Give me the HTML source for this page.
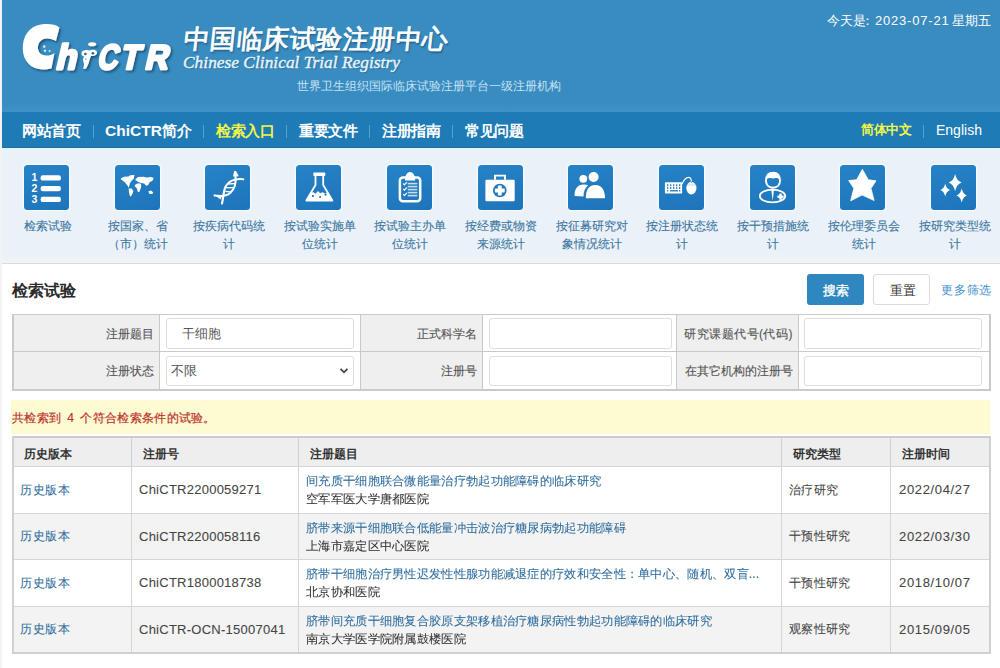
<!DOCTYPE html>
<html><head><meta charset="utf-8"><style>
*{box-sizing:border-box;margin:0;padding:0}
html,body{width:1000px;height:668px;overflow:hidden;background:#f3f3f3;font-family:"Liberation Sans",sans-serif;position:relative}
.a{position:absolute;white-space:nowrap}
#hdr{position:absolute;left:2px;top:0;width:998px;height:112px;background:#398cc0}
#hdr2{position:absolute;left:2px;top:105px;width:998px;height:7px;background:linear-gradient(#3a8fc2,#3c93c6)}
#nav{position:absolute;left:2px;top:112px;width:998px;height:36px;background:#1f7bb6;border-bottom:1px solid #1b6ea6}
#icons{position:absolute;left:2px;top:148px;width:998px;height:116px;background:linear-gradient(#eaf1f8 0,#eaf1f8 92%,#f0f5f9 100%);border-top:1px solid #d9f5ff;border-bottom:1px solid #d5dde3}
.nv{position:absolute;top:113px;line-height:35px;font-size:15px;letter-spacing:-0.3px;font-weight:bold;color:#fff;white-space:nowrap}
.sep{position:absolute;top:125px;width:1px;height:13px;background:#5e9ecb}
.tile{position:absolute;top:165px;width:45px;height:45px;border-radius:3.5px;background:linear-gradient(160deg,#2783c6,#1d74ba);box-shadow:0 0 0 1.3px #f4fcff}
.tile svg{position:absolute;left:0;top:0;width:45px;height:45px}
.lbl{position:absolute;top:216.5px;width:80px;text-align:center;font-size:12px;line-height:18.5px;color:#3b76a0;-webkit-text-stroke:0.1px #3b76a0}
.fl{position:absolute;background:#efefef;border:1px solid #c9c9c9;font-size:12px;color:#555;-webkit-text-stroke:0.12px currentColor;text-align:right;padding-right:5px;padding-top:1px;white-space:nowrap}
.fc{position:absolute;background:#fff;border:1px solid #c9c9c9}
.inp{position:absolute;background:#fff;border:1px solid #dedede;border-radius:3px;font-size:13px;color:#555;white-space:nowrap}
.th{position:absolute;background:#eeeeee;border:1px solid #d0d0d0;font-size:12px;font-weight:bold;color:#333;white-space:nowrap;padding-top:3px}
.td{position:absolute;border:1px solid #d6d6d6;font-size:13px;color:#444;white-space:nowrap;-webkit-text-stroke:0.08px currentColor}
.lnk{color:#2f6d9e}
.st{-webkit-text-stroke:0.2px currentColor}
</style></head><body>
<div class="a" style="left:2px;top:263px;width:998px;height:405px;background:#fff"></div><div id="hdr"></div><div id="hdr2"></div>
<svg class="a" style="left:0px;top:0px" width="200" height="90" viewBox="0 0 200 90">
<defs><filter id="sh" x="-20%" y="-20%" width="140%" height="140%"><feDropShadow dx="1.6" dy="1.8" stdDeviation="1.1" flood-color="#0a3a60" flood-opacity="0.7"/></filter></defs>
<g filter="url(#sh)" fill="#fff">
<path d="M59.5 27.5 C55 24 48 23.5 41 24.5 C29 26.5 22.5 36 22.8 49 C23 61 31 69.5 43 69.5 C46 69.5 49 69 51.5 68.5 L54.5 53 C52 55 49.5 55.5 46.5 55.5 C40.5 55.5 37.5 51.5 38 46.5 C38.5 41.5 42.5 38.5 47 38.5 C50.5 38.5 53 39.5 56 41 Z"/>
<g transform="translate(0,69) skewX(-13) translate(0,-69)" stroke="#fff" stroke-width="2.6" stroke-linejoin="round" font-family="Liberation Sans" font-weight="bold">
<text x="55" y="68.6" font-size="31" transform="translate(0,68.6) scale(1.08,1.13) translate(-4.2,-68.6)">h</text>
<text transform="translate(96.5,0) scale(0.8,1)" x="0" y="68.6" font-size="35">C</text>
<text transform="translate(119.5,0) scale(0.91,1)" x="0" y="68.6" font-size="34.5">T</text>
<text transform="translate(144,0) scale(0.93,1)" x="0" y="68.6" font-size="34.5">R</text>
</g>
<ellipse cx="92.2" cy="44.2" rx="4" ry="2"/>
<path d="M81.5 53 C82 50 86 49.5 89 50.5 C91.5 49.5 96 49 97 52 C97.5 55 94 56.5 91 56 C90 58 89.5 60 89 62 C88.5 64 87.5 66 86 68.8 L83 68.8 C84 66 84.5 64 83.5 62 C82.5 60 83 58 84.5 56.5 C82.5 56.5 81.2 55 81.5 53 Z"/>
</g>
<g fill="#cfe6f5"><circle cx="44.2" cy="46.6" r="1.3"/><circle cx="45" cy="50.7" r="1.2"/><circle cx="49.6" cy="51" r="1.1"/></g><g fill="#235f8c"><circle cx="85.4" cy="54" r="1.3"/><circle cx="92.9" cy="53.2" r="1.3"/></g><circle cx="85.8" cy="59.2" r="0.9" fill="#8fc3e6"/>
</svg>
<div class="a" style="left:182px;top:24px;font-family:'Liberation Serif',serif;font-size:26px;font-weight:normal;-webkit-text-stroke:0.9px #fff;color:#fff;line-height:32px;letter-spacing:0.5px;transform:skewX(-6deg);transform-origin:0 100%;text-shadow:1px 2px 2px rgba(10,50,90,.6)">中国临床试验注册中心</div>
<div class="a" style="left:183px;top:51.5px;font-family:'Liberation Serif',serif;font-style:italic;font-size:17.4px;color:#e6f4fc;-webkit-text-stroke:0.4px #e6f4fc;line-height:20px;text-shadow:1px 1px 1px rgba(10,50,90,.4)">Chinese Clinical Trial Registry</div>
<div class="a" style="left:297px;top:77px;font-size:12.3px;letter-spacing:0px;line-height:18px;color:#c6e2f4">世界卫生组织国际临床试验注册平台一级注册机构</div>
<div class="a" style="left:827px;top:12px;font-size:13px;line-height:18px;color:#fff">今天是</div><div class="a" style="left:861px;top:12px;font-size:13px;line-height:18px;color:#fff">：</div><div class="a" style="left:875px;top:12px;font-size:13px;line-height:18px;color:#fff;letter-spacing:0.8px">2023-07-21</div><div class="a" style="left:952px;top:12px;font-size:13px;line-height:18px;color:#fff">星期五</div>
<div id="nav"></div>
<div class="nv" style="left:22px;color:#fff">网站首页</div>
<div class="nv" style="left:105px;color:#fff"><span style="font-size:15.5px;letter-spacing:0">ChiCTR</span>简介</div>
<div class="nv" style="left:216px;color:#f2f545">检索入口</div>
<div class="nv" style="left:299px;color:#fff">重要文件</div>
<div class="nv" style="left:382px;color:#fff">注册指南</div>
<div class="nv" style="left:465px;color:#fff">常见问题</div>
<div class="sep" style="left:93px"></div>
<div class="sep" style="left:203px"></div>
<div class="sep" style="left:286px"></div>
<div class="sep" style="left:369px"></div>
<div class="sep" style="left:452px"></div>
<div class="nv" style="left:861px;font-size:12.6px;color:#f2f545">简体中文</div>
<div class="sep" style="left:923px"></div>
<div class="nv" style="left:936px;font-size:14px;font-weight:normal;letter-spacing:0px">English</div>
<div id="icons"></div>
<div class="tile" style="left:24.0px"><svg viewBox="0 0 45 45"><g fill="#fff"><rect x="16.6" y="10.3" width="20.3" height="5.3" rx="2.2"/><rect x="16.6" y="21" width="20.3" height="5.3" rx="2.2"/><rect x="16.6" y="31.8" width="20.3" height="5.3" rx="2.2"/></g><g fill="#fff" font-family="Liberation Sans" font-weight="bold" font-size="10.5"><text x="7.5" y="15.6">1</text><text x="7.5" y="26.6">2</text><text x="7.5" y="37.5">3</text></g></svg></div>
<div class="lbl" style="left:7.5px">检索试验</div>
<div class="tile" style="left:114.7px"><svg viewBox="0 0 45 45"><path fill="#fff" d="M5.7 13.4 L9.1 11.7 L13.3 11.4 L15.3 10.3 L19.5 10.0 L18.8 13.4 L16.7 15.8 L15.0 17.9 L14.3 20.7 L13.6 22.7 L12.6 20.7 L9.8 17.2 L7.8 15.8 L6.4 14.8 Z M13.6 23.4 L16.7 23.4 L18.4 26.2 L17.4 28.9 L15.7 31.7 L14.6 30.3 L14.0 26.9 Z M20.1 14.8 L22.9 12.1 L28.4 11.7 L31.9 12.4 L36.0 12.1 L38.7 13.1 L37.4 15.8 L34.6 17.2 L33.2 20.0 L31.2 20.7 L29.1 18.6 L26.3 17.9 L23.6 17.2 Z M19.8 20.0 L22.2 18.6 L25.7 18.6 L26.3 20.7 L25.7 23.4 L24.3 26.9 L22.9 26.9 L21.9 23.4 L19.8 21.3 Z M33.2 26.5 L36.0 25.5 L38.1 27.2 L37.4 28.9 L34.6 28.9 Z"/></svg></div>
<div class="lbl" style="left:98.2px">按国家、省（市）统计</div>
<div class="tile" style="left:205.4px"><svg viewBox="0 0 45 45"><g fill="none" stroke="#fff" stroke-width="2.1" stroke-linecap="round"><path d="M38.3 14.3 C30 13 22.5 16 19.8 23.5 C18.2 29 18.2 34 17 38.6"/><path d="M30.5 11.5 C31.3 18 29.5 24 25.2 28 C21.5 31 16 31.5 9.5 30.5"/></g><g stroke="#fff" stroke-width="1.3"><line x1="22.5" y1="19" x2="29.5" y2="18.7"/><line x1="21" y1="22.7" x2="28.5" y2="22.7"/><line x1="20.3" y1="26.3" x2="26.5" y2="27"/></g><path d="M29.2 6 L31 6 L33.8 11.3 L28 11.6 Z" fill="#fff"/><path d="M9 29.8 L17 31 L15.6 34.6 Z" fill="#fff"/></svg></div>
<div class="lbl" style="left:188.9px">按疾病代码统计</div>
<div class="tile" style="left:296.1px"><svg viewBox="0 0 45 45"><g fill="none" stroke="#fff" stroke-width="1.8" stroke-linejoin="round"><rect x="18.2" y="8.5" width="10.2" height="1.6" /><path d="M19.5 10.5 V20 L10.3 35.5 H36.4 L27.2 20 V10.5"/></g><path d="M14.8 28 L17 27 L19.5 28.8 L22 26 L24.2 28.2 L26.5 27.2 L29 28.4 L31.3 27.5 L36.5 35.6 H10.2 Z" fill="#fff"/><g fill="#1f6aa8"><circle cx="16.9" cy="31" r="1.1"/><circle cx="24.1" cy="32" r="1"/><circle cx="29.6" cy="29.6" r="1.1"/></g></svg></div>
<div class="lbl" style="left:279.6px">按试验实施单位统计</div>
<div class="tile" style="left:386.8px"><svg viewBox="0 0 45 45"><rect x="12.9" y="12.6" width="20.3" height="23.7" rx="3" fill="none" stroke="#fff" stroke-width="2.5"/><path d="M17.9 15.5 C17.9 11 19.8 7 23 7 C26.2 7 28.2 11 28.2 15.5 Z" fill="#fff"/><g stroke="#fff" stroke-width="1.6" opacity="0.75"><line x1="20.7" y1="18.6" x2="30.3" y2="18.6"/><line x1="20.7" y1="21.6" x2="30.3" y2="21.6"/><line x1="20.7" y1="24.6" x2="30.3" y2="24.6"/><line x1="20.7" y1="27.6" x2="30.3" y2="27.6"/><line x1="20.7" y1="30.6" x2="30.3" y2="30.6"/></g><g fill="none" stroke="#fff" stroke-width="1.2"><path d="M16.2 18.5 l1.3 1.3 l2.3-2.6"/><path d="M16.2 23.8 l1.3 1.3 l2.3-2.6"/><path d="M16.2 29.2 l1.3 1.3 l2.3-2.6"/></g></svg></div>
<div class="lbl" style="left:370.3px">按试验主办单位统计</div>
<div class="tile" style="left:477.5px"><svg viewBox="0 0 45 45"><rect x="7.4" y="14.8" width="29.3" height="21.4" rx="1.2" fill="#fff"/><path d="M17 14.8 V10.6 H27 V14.8" fill="none" stroke="#fff" stroke-width="1.9"/><circle cx="21.8" cy="25.5" r="6.8" fill="#2177b9"/><g fill="#fff"><rect x="19.9" y="20.6" width="3.8" height="9.8" rx="0.6"/><rect x="16.9" y="23.6" width="9.8" height="3.8" rx="0.6"/></g></svg></div>
<div class="lbl" style="left:461.0px">按经费或物资来源统计</div>
<div class="tile" style="left:568.2px"><svg viewBox="0 0 45 45"><g fill="#fff"><circle cx="15.3" cy="13.8" r="3.9"/><path d="M6.6 30.3 C6.6 24 9.5 19.6 15.5 19.6 C17.5 19.6 19 20 20 20.6 C17 23 15.5 26.5 15.5 31.5 L6.8 31 Z"/></g><path d="M17.2 33.9 C17 26 19.5 19.3 27.3 19.3 C35 19.3 37.8 26 37.6 33.9 Z" fill="#fff" stroke="#2177b9" stroke-width="1.2"/><circle cx="25.6" cy="12" r="5" fill="#fff"/></svg></div>
<div class="lbl" style="left:551.7px">按征募研究对象情况统计</div>
<div class="tile" style="left:658.9px"><svg viewBox="0 0 45 45"><rect x="5.9" y="17.2" width="17.2" height="11.4" rx="0.8" fill="#fff"/><g fill="#3a86c0"><rect x="8" y="19.2" width="1.3" height="2"/><rect x="11" y="19.2" width="1.3" height="2"/><rect x="14" y="19.2" width="1.3" height="2"/><rect x="17" y="19.2" width="1.3" height="2"/><rect x="20" y="19.2" width="1.3" height="2"/><rect x="8" y="22" width="1.3" height="2"/><rect x="11" y="22" width="1.3" height="2"/><rect x="14" y="22" width="1.3" height="2"/><rect x="17" y="22" width="1.3" height="2"/><rect x="20" y="22" width="1.3" height="2"/><rect x="8" y="25" width="1.3" height="1.5"/><rect x="11" y="25" width="8" height="1.5"/><rect x="20" y="25" width="1.3" height="1.5"/></g><ellipse cx="32.4" cy="23.1" rx="5.1" ry="6.3" fill="#fff"/><path d="M23 19.3 C24.5 15.5 26.5 12.4 29.5 12.4 C31.5 12.4 32.4 14 32.4 16.8" fill="none" stroke="#fff" stroke-width="1.1"/><path d="M27.5 20 H37.3" stroke="#8bbde0" stroke-width="0.6"/><path d="M31.8 18 L33 18 L32.4 16.8 Z" fill="#3a86c0"/></svg></div>
<div class="lbl" style="left:642.4px">按注册状态统计</div>
<div class="tile" style="left:749.6px"><svg viewBox="0 0 45 45"><path d="M16 15.8 C16 10 19 7.6 23 7.6 C27 7.6 30 10 30 15.8 C30 19.5 27.5 22.7 23 22.7 C18.5 22.7 16 19.5 16 15.8 Z" fill="none" stroke="#fff" stroke-width="1.9"/><path d="M16 15 C17 10 19.5 7.6 23 7.6 C26.5 7.6 29 10 30 15 C28 13 26 12.6 23 13.6 C20 12.6 18 13 16 15 Z" fill="#fff"/><ellipse cx="22.5" cy="31" rx="12.7" ry="6.3" fill="none" stroke="#fff" stroke-width="1.8"/><path d="M21.2 24.6 L24 24.6 L22.7 35.8 Z" fill="#fff"/><g fill="#fff"><rect x="27.4" y="30.5" width="6.2" height="2.4"/><rect x="29.3" y="28.6" width="2.4" height="6.2"/></g></svg></div>
<div class="lbl" style="left:733.1px">按干预措施统计</div>
<div class="tile" style="left:840.3px"><svg viewBox="0 0 45 45"><path d="M22.4 4.3 L28.3 14.8 L36 15.8 L31 23.4 L34.1 35.5 L22.1 30 L10.7 35.8 L13.8 23.4 L8.7 15.5 L16.6 14.8 Z" fill="#fff" stroke="#fff" stroke-width="0.8" stroke-linejoin="round"/></svg></div>
<div class="lbl" style="left:823.8px">按伦理委员会统计</div>
<div class="tile" style="left:931.0px"><svg viewBox="0 0 45 45"><path fill="#fff" d="M24.1 9.000000000000002 Q25.53 15.71 30.6 17.6 Q25.53 19.49 24.1 26.200000000000003 Q22.67 19.49 17.6 17.6 Q22.67 15.71 24.1 9.000000000000002 Z M14.2 18.6 Q15.26 23.67 19.0 25.1 Q15.26 26.53 14.2 31.6 Q13.14 26.53 9.399999999999999 25.1 Q13.14 23.67 14.2 18.6 Z M30.7 23.6 Q31.84 28.98 35.9 30.5 Q31.84 32.02 30.7 37.4 Q29.56 32.02 25.5 30.5 Q29.56 28.98 30.7 23.6 Z"/></svg></div>
<div class="lbl" style="left:914.5px">按研究类型统计</div>
<div class="a" style="left:12px;top:281px;font-size:16px;font-weight:bold;color:#2a2a2a;line-height:20px">检索试验</div>
<div class="a" style="left:807px;top:274px;width:57px;height:31px;background:#2f87c0;border-radius:3px;color:#fff;font-size:13px;line-height:33px;text-align:center;-webkit-text-stroke:0.35px #fff">搜索</div>
<div class="a" style="left:873px;top:274px;width:57px;height:31px;background:#fff;border:1px solid #dcdcdc;border-radius:3px;color:#333;font-size:13px;line-height:31px;padding-left:2px;text-align:center">重置</div>
<div class="a" style="left:941px;top:281px;font-size:12px;line-height:18px;color:#3d8fd0;letter-spacing:0.8px">更多筛选</div>
<div class="fl" style="left:12px;top:314px;width:148px;height:38px;line-height:36px">注册题目</div>
<div class="fc" style="left:159px;top:314px;width:202px;height:38px"></div>
<div class="fl" style="left:360px;top:314px;width:123px;height:38px;line-height:36px">正式科学名</div>
<div class="fc" style="left:482px;top:314px;width:195px;height:38px"></div>
<div class="fl" style="left:676px;top:314px;width:123px;height:38px;line-height:36px"><span style="letter-spacing:0.5px">研究课题代号(代码)</span></div>
<div class="fc" style="left:798px;top:314px;width:193px;height:38px"></div>
<div class="fl" style="left:12px;top:351px;width:148px;height:39px;line-height:37px">注册状态</div>
<div class="fc" style="left:159px;top:351px;width:202px;height:39px"></div>
<div class="fl" style="left:360px;top:351px;width:123px;height:39px;line-height:37px">注册号</div>
<div class="fc" style="left:482px;top:351px;width:195px;height:39px"></div>
<div class="fl" style="left:676px;top:351px;width:123px;height:39px;line-height:37px">在其它机构的注册号</div>
<div class="fc" style="left:798px;top:351px;width:193px;height:39px"></div>
<div class="inp" style="left:166px;top:318px;width:188px;height:31px"><span style="position:absolute;left:15px;top:0;line-height:29px">干细胞</span></div>
<div class="inp" style="left:489px;top:318px;width:183px;height:31px"></div>
<div class="inp" style="left:804px;top:318px;width:178px;height:31px"></div>
<div class="inp" style="left:166px;top:356px;width:188px;height:30px"><span style="position:absolute;left:4px;top:0;line-height:28px">不限</span><svg style="position:absolute;left:172px;top:10px" width="10" height="8" viewBox="0 0 10 8"><path d="M1.5 1.8 L5 5.3 L8.5 1.8" fill="none" stroke="#444" stroke-width="1.8"/></svg></div>
<div class="inp" style="left:489px;top:356px;width:183px;height:30px"></div>
<div class="inp" style="left:804px;top:356px;width:178px;height:30px"></div>
<div class="a" style="left:11px;top:400px;width:979px;height:34px;background:#fcfbd2"></div>
<div class="a" style="left:12px;top:314px;width:979px;height:77px;border:2px solid #cacaca;border-top-width:1.5px"></div>
<div class="a" style="left:12px;top:409px;font-size:12px;line-height:18px;color:#c0332b;letter-spacing:0.3px;word-spacing:2.5px;-webkit-text-stroke:0.2px currentColor">共检索到 4 个符合检索条件的试验。</div>
<div class="th" style="left:12px;top:436px;width:120px;height:31px;line-height:29px;padding-left:11px">历史版本</div>
<div class="th" style="left:131px;top:436px;width:168px;height:31px;line-height:29px;padding-left:11px">注册号</div>
<div class="th" style="left:298px;top:436px;width:484px;height:31px;line-height:29px;padding-left:11px">注册题目</div>
<div class="th" style="left:781px;top:436px;width:110px;height:31px;line-height:29px;padding-left:11px">研究类型</div>
<div class="th" style="left:890px;top:436px;width:101px;height:31px;line-height:29px;padding-left:11px">注册时间</div>
<div class="td" style="left:12px;top:466px;width:120px;height:48px;background:#fff;line-height:46px;padding-left:7px;font-size:12px"><span class="lnk" style="letter-spacing:0.5px">历史版本</span></div>
<div class="td" style="left:131px;top:466px;width:168px;height:48px;background:#fff;line-height:46px;padding-left:7px;font-size:13px"><span style="letter-spacing:0.25px">ChiCTR2200059271</span></div>
<div class="td" style="left:298px;top:466px;width:484px;height:48px;background:#fff"><div style="position:absolute;left:7px;top:5px;line-height:18px;font-size:12px;transform:scaleX(1.025);transform-origin:0 0"><div class="lnk">间充质干细胞联合微能量治疗勃起功能障碍的临床研究</div><div style="color:#333">空军军医大学唐都医院</div></div></div>
<div class="td" style="left:781px;top:466px;width:110px;height:48px;background:#fff;line-height:46px;padding-left:7px;font-size:12px"><span style="letter-spacing:0.3px">治疗研究</span></div>
<div class="td" style="left:890px;top:466px;width:101px;height:48px;background:#fff;line-height:46px;padding-left:8px;font-size:13px"><span style="letter-spacing:0.65px">2022/04/27</span></div>
<div class="td" style="left:12px;top:513px;width:120px;height:47px;background:#f3f3f3;line-height:45px;padding-left:7px;font-size:12px"><span class="lnk" style="letter-spacing:0.5px">历史版本</span></div>
<div class="td" style="left:131px;top:513px;width:168px;height:47px;background:#f3f3f3;line-height:45px;padding-left:7px;font-size:13px"><span style="letter-spacing:0.25px">ChiCTR2200058116</span></div>
<div class="td" style="left:298px;top:513px;width:484px;height:47px;background:#f3f3f3"><div style="position:absolute;left:7px;top:5px;line-height:18px;font-size:12px;transform:scaleX(1.025);transform-origin:0 0"><div class="lnk">脐带来源干细胞联合低能量冲击波治疗糖尿病勃起功能障碍</div><div style="color:#333">上海市嘉定区中心医院</div></div></div>
<div class="td" style="left:781px;top:513px;width:110px;height:47px;background:#f3f3f3;line-height:45px;padding-left:7px;font-size:12px"><span style="letter-spacing:0.3px">干预性研究</span></div>
<div class="td" style="left:890px;top:513px;width:101px;height:47px;background:#f3f3f3;line-height:45px;padding-left:8px;font-size:13px"><span style="letter-spacing:0.65px">2022/03/30</span></div>
<div class="td" style="left:12px;top:559px;width:120px;height:48px;background:#fff;line-height:46px;padding-left:7px;font-size:12px"><span class="lnk" style="letter-spacing:0.5px">历史版本</span></div>
<div class="td" style="left:131px;top:559px;width:168px;height:48px;background:#fff;line-height:46px;padding-left:7px;font-size:13px"><span style="letter-spacing:0.25px">ChiCTR1800018738</span></div>
<div class="td" style="left:298px;top:559px;width:484px;height:48px;background:#fff"><div style="position:absolute;left:7px;top:5px;line-height:18px;font-size:12px;transform:scaleX(1.025);transform-origin:0 0"><div class="lnk">脐带干细胞治疗男性迟发性性腺功能减退症的疗效和安全性：单中心、随机、双盲...</div><div style="color:#333">北京协和医院</div></div></div>
<div class="td" style="left:781px;top:559px;width:110px;height:48px;background:#fff;line-height:46px;padding-left:7px;font-size:12px"><span style="letter-spacing:0.3px">干预性研究</span></div>
<div class="td" style="left:890px;top:559px;width:101px;height:48px;background:#fff;line-height:46px;padding-left:8px;font-size:13px"><span style="letter-spacing:0.65px">2018/10/07</span></div>
<div class="td" style="left:12px;top:606px;width:120px;height:47px;background:#f3f3f3;line-height:45px;padding-left:7px;font-size:12px"><span class="lnk" style="letter-spacing:0.5px">历史版本</span></div>
<div class="td" style="left:131px;top:606px;width:168px;height:47px;background:#f3f3f3;line-height:45px;padding-left:7px;font-size:13px"><span style="letter-spacing:0.25px">ChiCTR-OCN-15007041</span></div>
<div class="td" style="left:298px;top:606px;width:484px;height:47px;background:#f3f3f3"><div style="position:absolute;left:7px;top:5px;line-height:18px;font-size:12px;transform:scaleX(1.025);transform-origin:0 0"><div class="lnk">脐带间充质干细胞复合胶原支架移植治疗糖尿病性勃起功能障碍的临床研究</div><div style="color:#333">南京大学医学院附属鼓楼医院</div></div></div>
<div class="td" style="left:781px;top:606px;width:110px;height:47px;background:#f3f3f3;line-height:45px;padding-left:7px;font-size:12px"><span style="letter-spacing:0.3px">观察性研究</span></div>
<div class="td" style="left:890px;top:606px;width:101px;height:47px;background:#f3f3f3;line-height:45px;padding-left:8px;font-size:13px"><span style="letter-spacing:0.65px">2015/09/05</span></div>
<div class="a" style="left:12px;top:436px;width:979px;height:218px;border:2px solid #d0d0d0;border-top-color:#cccccc"></div>
</body></html>
